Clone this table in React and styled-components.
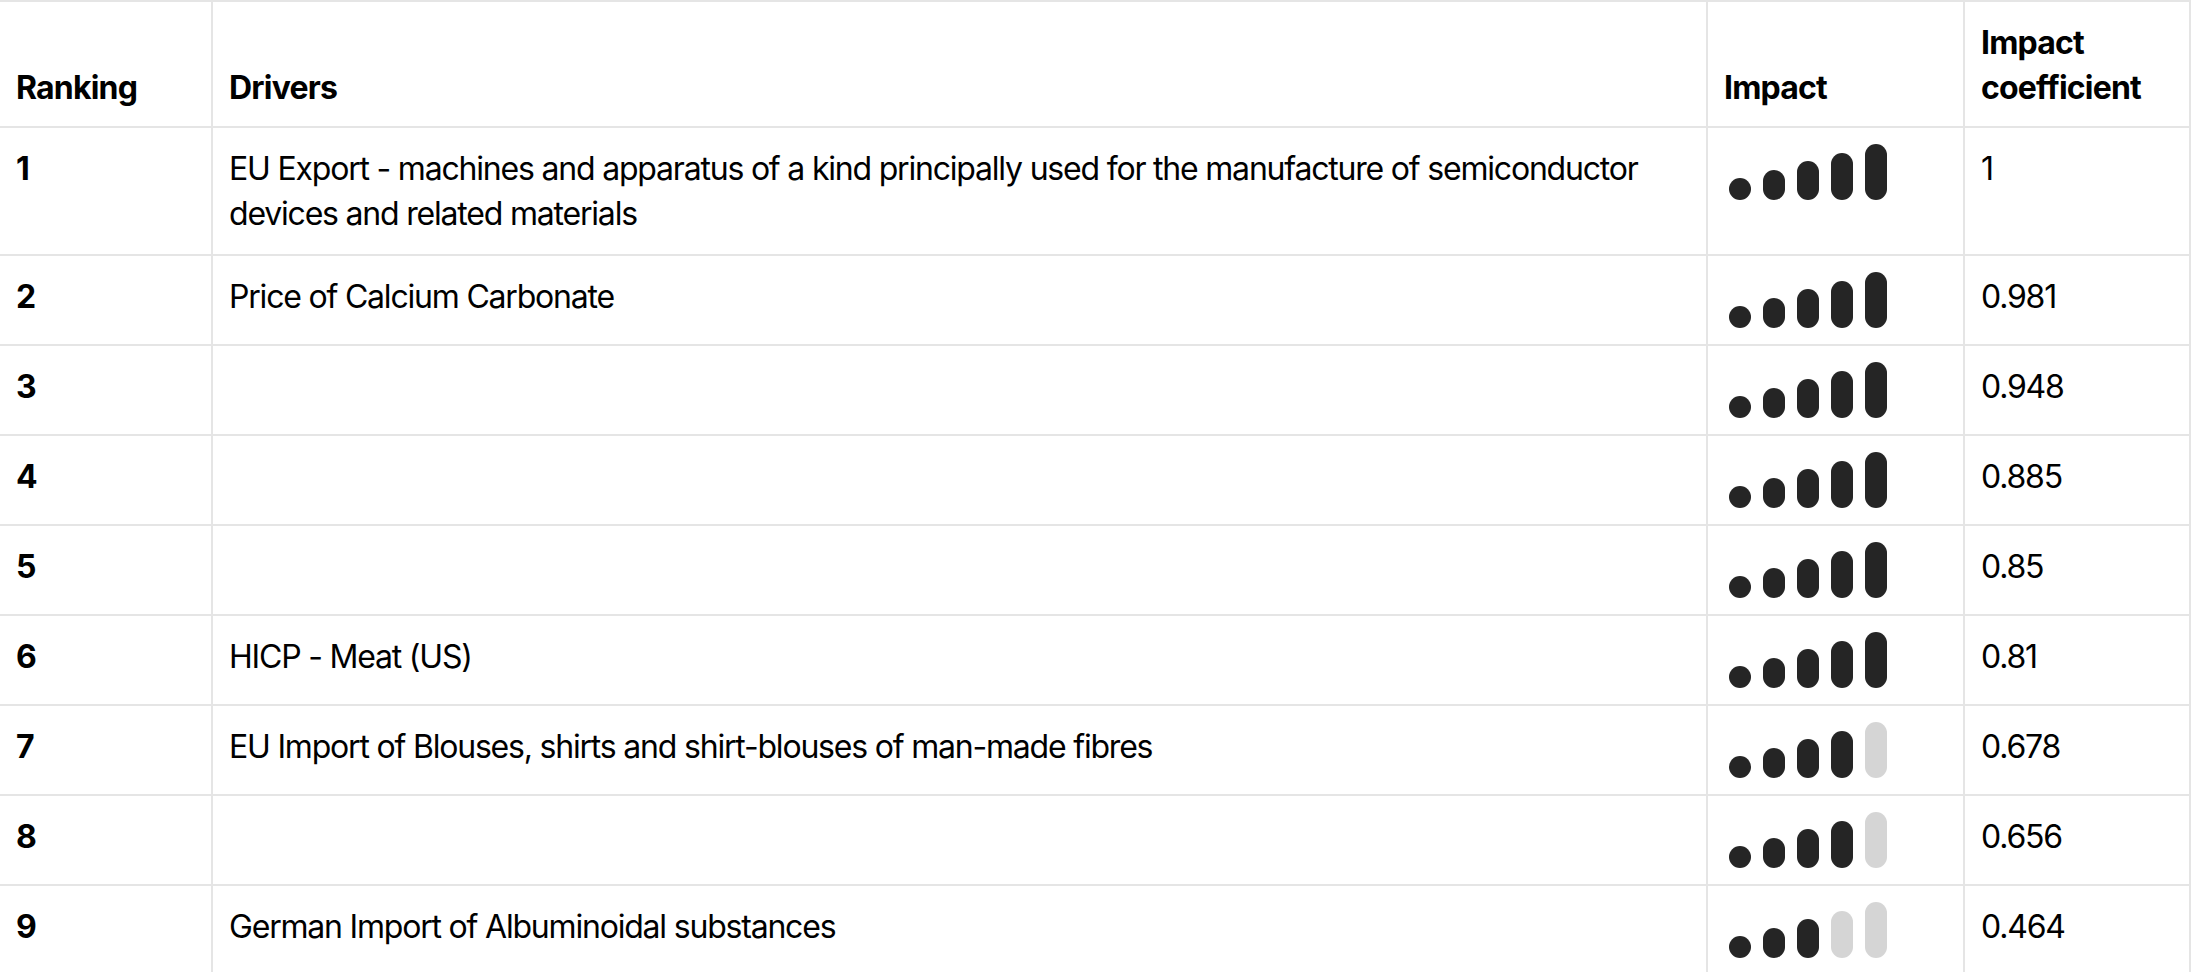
import React from "react";
import styled, { createGlobalStyle } from "styled-components";

const Global = createGlobalStyle`
  html, body { margin: 0; padding: 0; background: #fff; }
  body { font-family: Inter, "Noto Sans", "Liberation Sans", sans-serif; color: #000; }
`;

const Table = styled.table`
  width: 2190px;
  table-layout: fixed;
  border-collapse: collapse;
  font-size: 32px;
  line-height: 45px;
`;

const HeadCell = styled.th`
  text-align: left;
  vertical-align: bottom;
  font-weight: 700;
  letter-spacing: -0.8px;
  padding: 18px 16px 16px;
  border: 2px solid #e5e5e5;
  border-left: ${(p) => (p.$first ? "none" : "2px solid #e5e5e5")};
`;

const Cell = styled.td`
  vertical-align: top;
  padding: ${(p) => (p.$bars ? "16px 16px 16px 21px" : "18px 16px 18px")};
  font-weight: ${(p) => (p.$bold ? 700 : 400)};
  letter-spacing: ${(p) => (p.$bold ? "-0.8px" : "-1.2px")};
  border: 2px solid #e5e5e5;
  border-left: ${(p) => (p.$first ? "none" : "2px solid #e5e5e5")};
`;

const Bars = styled.div`
  display: flex;
  align-items: flex-end;
  gap: 12px;
  height: 56px;
`;

const Bar = styled.span`
  display: block;
  width: 22px;
  height: ${(p) => p.$h}px;
  border-radius: 11px;
  background: ${(p) => (p.$on ? "#252525" : "#d5d5d5")};
`;

const HEIGHTS = [22, 30.5, 39, 47.5, 56];

const rows = [
  { rank: 1, driver: "EU Export - machines and apparatus of a kind principally used for the manufacture of semiconductor devices and related materials", level: 5, coef: "1" },
  { rank: 2, driver: "Price of Calcium Carbonate", level: 5, coef: "0.981" },
  { rank: 3, driver: "", level: 5, coef: "0.948" },
  { rank: 4, driver: "", level: 5, coef: "0.885" },
  { rank: 5, driver: "", level: 5, coef: "0.85" },
  { rank: 6, driver: "HICP - Meat (US)", level: 5, coef: "0.81" },
  { rank: 7, driver: "EU Import of Blouses, shirts and shirt-blouses of man-made fibres", level: 4, coef: "0.678" },
  { rank: 8, driver: "", level: 4, coef: "0.656" },
  { rank: 9, driver: "German Import of Albuminoidal substances", level: 3, coef: "0.464" },
];

function ImpactBars({ level }) {
  return (
    <Bars>
      {HEIGHTS.map((h, i) => (
        <Bar key={i} $h={h} $on={i < level} />
      ))}
    </Bars>
  );
}

export default function App() {
  return (
    <>
      <Global />
      <Table>
        <colgroup>
          <col style={{ width: 212 }} />
          <col style={{ width: 1495 }} />
          <col style={{ width: 257 }} />
          <col style={{ width: 226 }} />
        </colgroup>
        <thead>
          <tr>
            <HeadCell $first>Ranking</HeadCell>
            <HeadCell>Drivers</HeadCell>
            <HeadCell>Impact</HeadCell>
            <HeadCell>Impact coefficient</HeadCell>
          </tr>
        </thead>
        <tbody>
          {rows.map((r) => (
            <tr key={r.rank}>
              <Cell $first $bold>{r.rank}</Cell>
              <Cell>{r.driver}</Cell>
              <Cell $bars>
                <ImpactBars level={r.level} />
              </Cell>
              <Cell>{r.coef}</Cell>
            </tr>
          ))}
        </tbody>
      </Table>
    </>
  );
}
